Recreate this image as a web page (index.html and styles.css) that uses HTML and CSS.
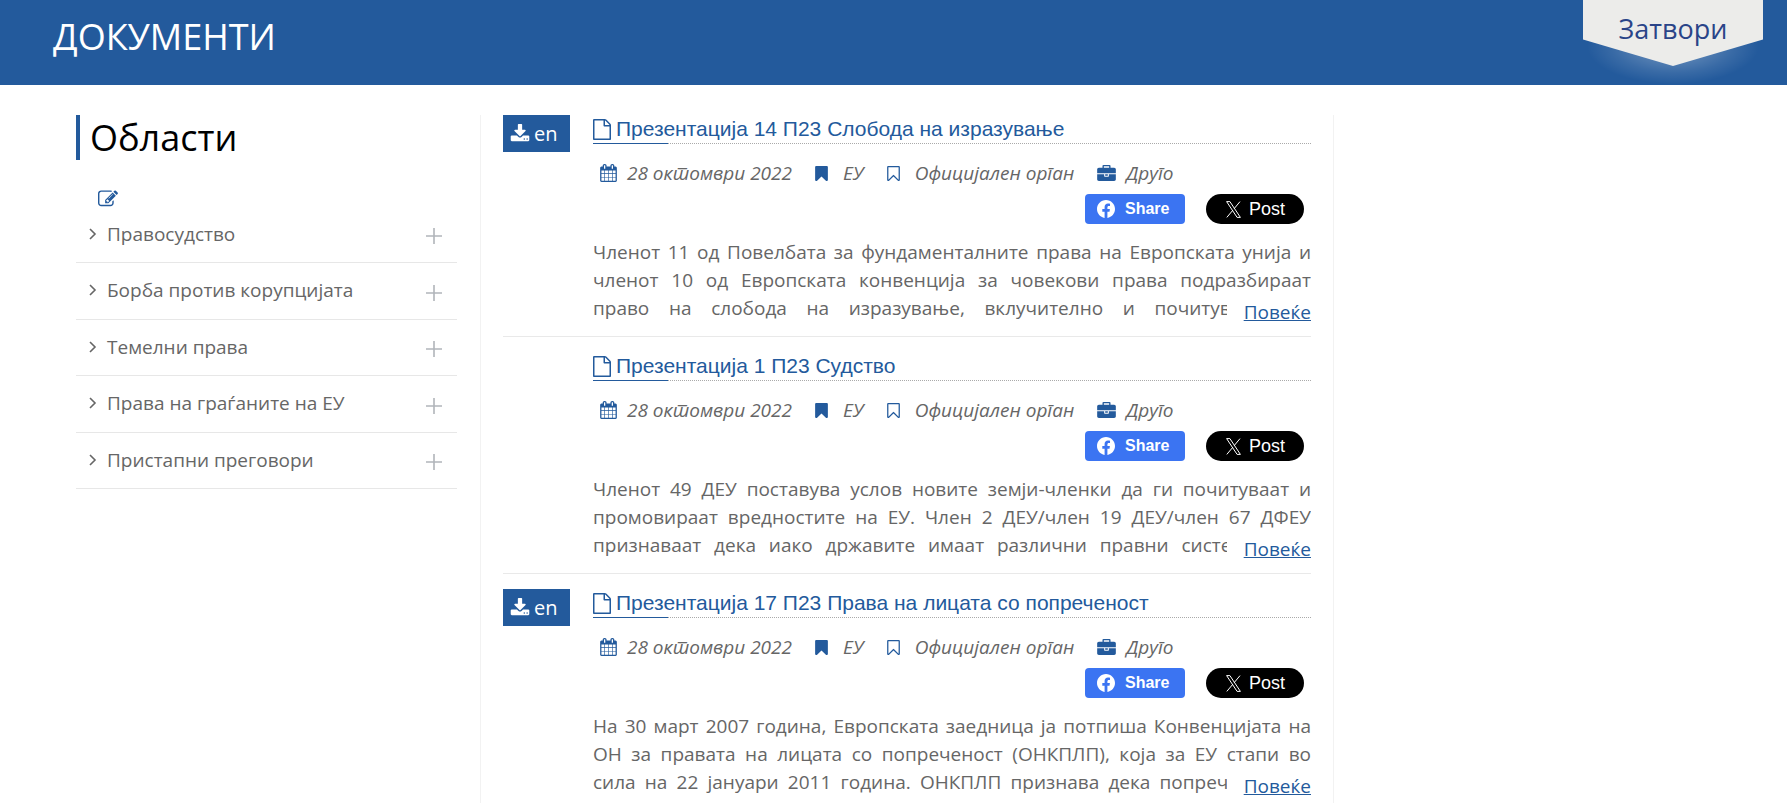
FILE: index.html
```html
<!DOCTYPE html>
<html lang="mk">
<head>
    <meta charset="UTF-8">
    <meta name="viewport" content="width=device-width, initial-scale=1">
    <title>Документи</title>
    <link rel="stylesheet" href="styles.css">
</head>

<body>
    <!-- icons used on the page -->
    <svg class="sprite" aria-hidden="true">
        <symbol id="icon-edit" viewBox="0 0 1792 1792"><path d="M888 1184l116-116-152-152-116 116v56h96v96h56zm440-720q-16-16-33 1l-350 350q-17 17-1 33t33-1l350-350q17-17 1-33zm80 594v190q0 119-84.5 203.5t-203.5 84.5h-832q-119 0-203.5-84.5t-84.5-203.5v-832q0-119 84.5-203.5t203.5-84.5h832q63 0 117 25 15 7 18 23 3 17-9 29l-49 49q-14 14-32 8-23-6-45-6h-832q-66 0-113 47t-47 113v832q0 66 47 113t113 47h832q66 0 113-47t47-113v-126q0-13 9-22l64-64q15-15 35-7t20 29zm-96-738l288 288-672 672h-288v-288zm444 132l-92 92-288-288 92-92q28-28 68-28t68 28l152 152q28 28 28 68t-28 68z"/></symbol>
        <symbol id="icon-angle" viewBox="0 0 8 12"><path d="M1 1l5 5-5 5" fill="none" stroke="currentColor" stroke-width="1.6"/></symbol>
        <symbol id="icon-plus" viewBox="0 0 16 16"><path d="M0 8h16M8 0v16" fill="none" stroke="currentColor" stroke-width="1.6"/></symbol>
        <symbol id="icon-download" viewBox="0 0 1792 1792"><path d="M1344 1344q0-26-19-45t-45-19-45 19-19 45 19 45 45 19 45-19 19-45zm256 0q0-26-19-45t-45-19-45 19-19 45 19 45 45 19 45-19 19-45zm128-224v320q0 40-28 68t-68 28h-1472q-40 0-68-28t-28-68v-320q0-40 28-68t68-28h465l135 136q58 56 136 56t136-56l136-136h464q40 0 68 28t28 68zm-325-569q17 41-14 70l-448 448q-18 19-45 19t-45-19l-448-448q-31-29-14-70 17-39 59-39h256v-448q0-26 19-45t45-19h256q26 0 45 19t19 45v448h256q42 0 59 39z"/></symbol>
        <symbol id="icon-file" viewBox="128 0 1536 1792"><path d="M1596 380q28 28 48 76t20 88v1152q0 40-28 68t-68 28h-1344q-40 0-68-28t-28-68v-1600q0-40 28-68t68-28h896q40 0 88 20t76 48zm-444-244v376h376q-10-29-22-41l-313-313q-12-12-41-22zm384 1528v-1024h-416q-40 0-68-28t-28-68v-416h-768v1536h1280z"/></symbol>
        <symbol id="icon-calendar" viewBox="64 0 1664 1792"><path d="M192 1664h288v-288h-288v288zm352 0h320v-288h-320v288zm-352-352h288v-320h-288v320zm352 0h320v-320h-320v320zm-352-384h288v-288h-288v288zm736 736h320v-288h-320v288zm-384-736h320v-288h-320v288zm768 736h288v-288h-288v288zm-384-352h320v-320h-320v320zm-352-864v-288q0-13-9.500-22.500t-22.500-9.500h-64q-13 0-22.500 9.500t-9.500 22.500v288q0 13 9.500 22.500t22.500 9.500h64q13 0 22.500-9.500t9.500-22.500zm736 864h288v-320h-288v320zm-384-384h320v-288h-320v288zm384 0h288v-288h-288v288zm32-480v-288q0-13-9.500-22.500t-22.500-9.500h-64q-13 0-22.500 9.500t-9.500 22.500v288q0 13 9.500 22.500t22.500 9.500h64q13 0 22.500-9.500t9.500-22.500zm384-64v1280q0 52-38 90t-90 38h-1408q-52 0-90-38t-38-90v-1280q0-52 38-90t90-38h128v-96q0-66 47-113t113-47h64q66 0 113 47t47 113v96h384v-96q0-66 47-113t113-47h64q66 0 113 47t47 113v96h128q52 0 90 38t38 90z"/></symbol>
        <symbol id="icon-bookmark" viewBox="256 128 1280 1507"><path d="M1420 128q23 0 44 9 33 13 52.500 41t19.500 62v1289q0 34-19.500 62t-52.500 41q-19 8-44 8-48 0-83-32l-441-424-441 424q-36 33-83 33-23 0-44-9-33-13-52.500-41t-19.500-62v-1289q0-34 19.500-62t52.500-41q21-9 44-9h1048z"/></symbol>
        <symbol id="icon-bookmark-o" viewBox="256 128 1280 1507"><path d="M1408 256h-1024v1242l423-406 89-85 89 85 423 406v-1242zm12-128q23 0 44 9 33 13 52.500 41t19.500 62v1289q0 34-19.500 62t-52.500 41q-19 8-44 8-48 0-83-32l-441-424-441 424q-36 33-83 33-23 0-44-9-33-13-52.500-41t-19.500-62v-1289q0-34 19.500-62t52.500-41q21-9 44-9h1048z"/></symbol>
        <symbol id="icon-briefcase" viewBox="0 0 1792 1536"><path d="M640 256h512v-128h-512v128zm1152 640v480q0 66-47 113t-113 47h-1472q-66 0-113-47t-47-113v-480h672v160q0 26 19 45t45 19h320q26 0 45-19t19-45v-160h672zm-768 0v128h-256v-128h256zm768-480v384h-1792v-384q0-66 47-113t113-47h352v-160q0-40 28-68t68-28h576q40 0 68 28t28 68v160h352q66 0 113 47t47 113z"/></symbol>
        <symbol id="icon-facebook" viewBox="0 0 24 24"><path d="M24 12.073c0-6.627-5.373-12-12-12s-12 5.373-12 12c0 5.990 4.388 10.954 10.125 11.854v-8.385H7.078v-3.470h3.047V9.430c0-3.007 1.792-4.669 4.533-4.669 1.312 0 2.686.235 2.686.235v2.953H15.830c-1.491 0-1.956.925-1.956 1.874v2.250h3.328l-.532 3.470h-2.796v8.385C19.612 23.027 24 18.062 24 12.073z"/></symbol>
        <symbol id="icon-x" viewBox="0 0 15 17"><path d="M.6.600h3.300L14.400 16.400h-3.300zM14 .600L8.200 7.600M6.800 9.300L.8 16.400" fill="none" stroke="currentColor" stroke-width="1"/></symbol>
    </svg>

    <header class="header">
        <h1>ДОКУМЕНТИ</h1>
        <div class="close-wrap">
            <button type="button" class="close">Затвори</button>
        </div>
    </header>

    <div class="page">
        <aside class="sidebar">
            <h2>Области</h2>
            <a href="#" class="edit" aria-label="Уреди"><svg><use href="#icon-edit"/></svg></a>
            <ul class="areas">
                <li>
                    <a href="#"><svg class="angle"><use href="#icon-angle"/></svg>Правосудство</a>
                    <button type="button" aria-label="Прошири"><svg><use href="#icon-plus"/></svg></button>
                </li>
                <li>
                    <a href="#"><svg class="angle"><use href="#icon-angle"/></svg>Борба против корупцијата</a>
                    <button type="button" aria-label="Прошири"><svg><use href="#icon-plus"/></svg></button>
                </li>
                <li>
                    <a href="#"><svg class="angle"><use href="#icon-angle"/></svg>Темелни права</a>
                    <button type="button" aria-label="Прошири"><svg><use href="#icon-plus"/></svg></button>
                </li>
                <li>
                    <a href="#"><svg class="angle"><use href="#icon-angle"/></svg>Права на граѓаните на ЕУ</a>
                    <button type="button" aria-label="Прошири"><svg><use href="#icon-plus"/></svg></button>
                </li>
                <li>
                    <a href="#"><svg class="angle"><use href="#icon-angle"/></svg>Пристапни преговори</a>
                    <button type="button" aria-label="Прошири"><svg><use href="#icon-plus"/></svg></button>
                </li>
            </ul>
        </aside>

        <main class="documents">
            <article class="document">
                <div class="files">
                    <a href="#" class="download"><svg><use href="#icon-download"/></svg>en</a>
                </div>
                <div class="content">
                    <h3><a href="#"><svg><use href="#icon-file"/></svg>Презентација 14 П23 Слобода на изразување</a></h3>
                    <div class="meta">
                        <span class="date"><svg><use href="#icon-calendar"/></svg>28 октомври 2022</span>
                        <span class="source"><svg><use href="#icon-bookmark"/></svg>ЕУ</span>
                        <span class="source"><svg><use href="#icon-bookmark-o"/></svg>Официјален орган</span>
                        <span class="type"><svg><use href="#icon-briefcase"/></svg>Друго</span>
                    </div>
                    <div class="social">
                        <button type="button" class="share"><svg><use href="#icon-facebook"/></svg>Share</button>
                        <button type="button" class="post"><svg><use href="#icon-x"/></svg>Post</button>
                    </div>
                    <div class="summary">
                        <p>Членот 11 од Повелбата за фундаменталните права на Европската унија и<br>
                        членот 10 од Европската конвенција за човекови права подразбираат<br>
                        право на слобода на изразување, вклучително и почитување на</p>
                        <a href="#" class="more">Повеќе</a>
                    </div>
                </div>
            </article>

            <article class="document">
                <div class="files"></div>
                <div class="content">
                    <h3><a href="#"><svg><use href="#icon-file"/></svg>Презентација 1 П23 Судство</a></h3>
                    <div class="meta">
                        <span class="date"><svg><use href="#icon-calendar"/></svg>28 октомври 2022</span>
                        <span class="source"><svg><use href="#icon-bookmark"/></svg>ЕУ</span>
                        <span class="source"><svg><use href="#icon-bookmark-o"/></svg>Официјален орган</span>
                        <span class="type"><svg><use href="#icon-briefcase"/></svg>Друго</span>
                    </div>
                    <div class="social">
                        <button type="button" class="share"><svg><use href="#icon-facebook"/></svg>Share</button>
                        <button type="button" class="post"><svg><use href="#icon-x"/></svg>Post</button>
                    </div>
                    <div class="summary">
                        <p>Членот 49 ДЕУ поставува услов новите земји-членки да ги почитуваат и<br>
                        промовираат вредностите на ЕУ. Член 2 ДЕУ/член 19 ДЕУ/член 67 ДФЕУ<br>
                        признаваат дека иако државите имаат различни правни системи сите</p>
                        <a href="#" class="more">Повеќе</a>
                    </div>
                </div>
            </article>

            <article class="document">
                <div class="files">
                    <a href="#" class="download"><svg><use href="#icon-download"/></svg>en</a>
                </div>
                <div class="content">
                    <h3><a href="#"><svg><use href="#icon-file"/></svg>Презентација 17 П23 Права на лицата со попреченост</a></h3>
                    <div class="meta">
                        <span class="date"><svg><use href="#icon-calendar"/></svg>28 октомври 2022</span>
                        <span class="source"><svg><use href="#icon-bookmark"/></svg>ЕУ</span>
                        <span class="source"><svg><use href="#icon-bookmark-o"/></svg>Официјален орган</span>
                        <span class="type"><svg><use href="#icon-briefcase"/></svg>Друго</span>
                    </div>
                    <div class="social">
                        <button type="button" class="share"><svg><use href="#icon-facebook"/></svg>Share</button>
                        <button type="button" class="post"><svg><use href="#icon-x"/></svg>Post</button>
                    </div>
                    <div class="summary">
                        <p>На 30 март 2007 година, Европската заедница ја потпиша Конвенцијата на<br>
                        ОН за правата на лицата со попреченост (ОНКПЛП), која за ЕУ стапи во<br>
                        сила на 22 јануари 2011 година. ОНКПЛП признава дека попреченоста е</p>
                        <a href="#" class="more">Повеќе</a>
                    </div>
                </div>
            </article>
        </main>
    </div>
</body>

</html>
```

FILE: styles.css
```css
* {
    box-sizing: border-box;
}

body {
    margin: 0;
    font-family: "Open Sans", "Noto Sans", sans-serif;
    font-size: 19px;
    line-height: 28px;
    color: #666;
    background-color: #fff;
}

h1,
h2,
h3,
p,
ul {
    margin: 0;
    padding: 0;
    font-weight: normal;
}

a {
    color: #235a9c;
}

button {
    padding: 0;
    border: none;
    cursor: pointer;
}

svg {
    flex: none;
    fill: currentColor;
}

.sprite {
    display: none;
}

/* Header */

.header {
    display: flex;
    justify-content: space-between;
    align-items: flex-start;
    height: 85px;
    padding: 0 24px 0 53px;
    overflow: hidden;
    background-color: #235a9c;
}

.header h1 {
    padding-top: 12px;
    font-size: 36px;
    line-height: 50px;
    color: #fff;
}

.close-wrap {
    height: 85px;
    background: radial-gradient(86px 38px at 50% 46px, rgba(255, 255, 255, 0.4), rgba(255, 255, 255, 0.1) 70%, transparent);
}

.close {
    display: block;
    width: 180px;
    height: 66px;
    padding-bottom: 10px;
    font-family: inherit;
    font-size: 27px;
    color: #2a4488;
    background-color: #ececea;
    clip-path: polygon(0 0, 100% 0, 100% 60%, 50% 100%, 0 60%);
}

/* Page columns */

.page {
    display: grid;
    grid-template-columns: 404fr 854fr 453fr;
    padding: 30px 0 0 76px;
}

/* Sidebar */

.sidebar {
    padding-right: 23px;
}

.sidebar h2 {
    padding-left: 10px;
    border-left: 4px solid #235a9c;
    font-size: 36px;
    line-height: 45px;
    color: #000;
}

.edit {
    display: block;
    height: 47px;
    padding: 29px 0 0 22px;
}

.edit svg {
    display: block;
    width: 20px;
    height: 20px;
}

.areas {
    list-style: none;
}

.areas li {
    display: flex;
    justify-content: space-between;
    align-items: center;
    height: 57px;
    padding: 0 15px 2px 13px;
    border-bottom: 1px solid #e7e7e7;
}

.areas li:nth-child(odd) {
    height: 56px;
}

.areas a {
    display: flex;
    align-items: center;
    gap: 10px;
    color: #666;
    text-decoration: none;
}

.areas button {
    padding-top: 5px;
    color: #b1b5ba;
    background: none;
}

.areas button svg {
    display: block;
    width: 16px;
    height: 16px;
}

.angle {
    width: 8px;
    height: 12px;
}

/* Documents */

.documents {
    padding: 0 22px;
    border-left: 1px solid #f2f2f2;
    border-right: 1px solid #f2f2f2;
}

.document {
    display: flex;
    gap: 23px;
    height: 222px;
    margin-bottom: 15px;
    border-bottom: 1px solid #e9e9e9;
}

.files {
    flex: none;
    width: 67px;
}

.download {
    display: flex;
    align-items: center;
    gap: 4px;
    height: 37px;
    padding-left: 7px;
    font-size: 20px;
    color: #fff;
    background-color: #235a9c;
    text-decoration: none;
}

.download svg {
    width: 20px;
    height: 20px;
}

.content {
    flex: 1;
    min-width: 0;
}

.content h3 {
    position: relative;
    border-bottom: 1px dotted #aaa;
    font-family: "Liberation Sans", Arial, sans-serif;
    font-size: 21px;
    line-height: 28px;
}

.content h3::after {
    content: "";
    position: absolute;
    left: 0;
    bottom: -1px;
    width: 75px;
    height: 1px;
    background-color: #235a9c;
}

.content h3 a {
    display: flex;
    align-items: center;
    gap: 5px;
    text-decoration: none;
}

.content h3 svg {
    width: 18px;
    height: 21px;
}

.meta {
    display: flex;
    padding: 15px 0 0 7px;
    gap: 23px;
    font-style: italic;
}

.meta span {
    display: flex;
    align-items: center;
    gap: 15px;
}

.meta svg {
    color: #235a9c;
}

.meta .date,
.meta .type {
    gap: 10px;
}

.date svg {
    width: 17px;
    height: 18px;
}

.source svg {
    width: 13px;
    height: 15px;
}

.type svg {
    width: 19px;
    height: 16px;
}

.social {
    display: flex;
    justify-content: flex-end;
    gap: 21px;
    padding: 7px 7px 0 0;
}

.social button {
    display: flex;
    align-items: center;
    height: 30px;
    font-family: "Liberation Sans", Arial, sans-serif;
    color: #fff;
}

.share {
    gap: 10px;
    width: 100px;
    padding-left: 12px;
    border-radius: 4px;
    background-color: #3b74f2;
    font-size: 16px;
    font-weight: bold;
}

.share svg {
    width: 18px;
    height: 18px;
}

.post {
    gap: 8px;
    width: 98px;
    padding-left: 20px;
    border-radius: 15px;
    background-color: #000;
    font-size: 18px;
}

.post svg {
    width: 15px;
    height: 17px;
}

.summary {
    position: relative;
    height: 84px;
    margin-top: 14px;
}

.summary p {
    height: 84px;
    overflow: hidden;
    text-align: justify;
    text-align-last: justify;
}

/* Link lies over the end of the last line */
.more {
    position: absolute;
    right: 0;
    bottom: -4px;
    padding-left: 17px;
    background-color: #fff;
}
```
